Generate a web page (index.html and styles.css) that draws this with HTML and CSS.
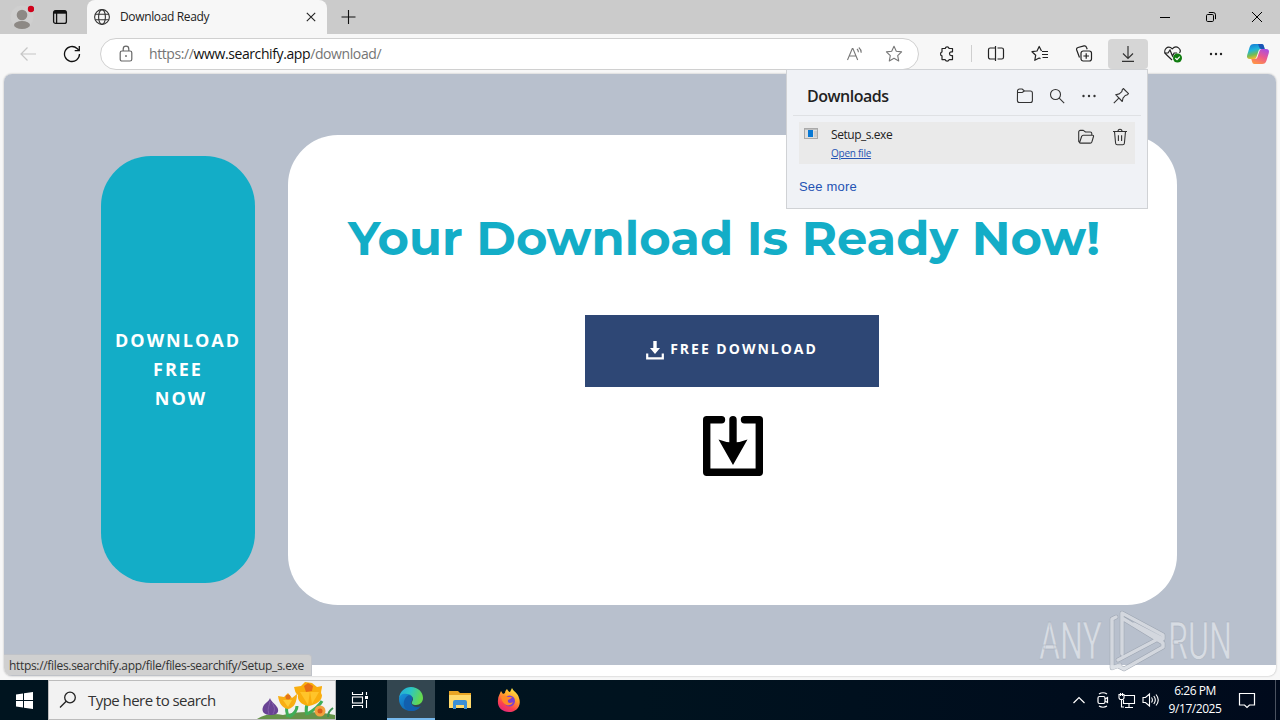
FILE: index.html
```
<!DOCTYPE html>
<html lang="en">
<head>
  <meta charset="UTF-8" />
  <meta name="viewport" content="width=device-width, initial-scale=1.0" />
  <title>Download Ready</title>
  <link rel="stylesheet" href="styles.css">
</head>
<body>
  <div class="browser">
    <div class="titlebar">
      <div class="profile">
        <svg width="24" height="26" viewBox="0 0 24 26"><circle cx="12" cy="13" r="11.5" fill="#cfcfcf"/><circle cx="12" cy="11" r="5.3" fill="#8d8985"/><ellipse cx="12" cy="21" rx="8" ry="4" fill="#8d8985"/><circle cx="21" cy="5" r="3.2" fill="#d0021b"/></svg>
      </div>
      <div class="tab-actions">
        <svg width="16" height="16" viewBox="0 0 16 16" fill="none" stroke="#111" stroke-width="1.3"><rect x="1.6" y="1.6" width="12.8" height="12.8" rx="2"/><path d="M2 3.2h12" stroke-width="3"/><path d="M4.6 4v10"/></svg>
      </div>
      <div class="tab">
        <svg width="18" height="18" viewBox="0 0 18 18" fill="none" stroke="#333" stroke-width="1.1"><circle cx="9" cy="9" r="7.4"/><ellipse cx="9" cy="9" rx="3.4" ry="7.4"/><path d="M2.2 6.2h13.6M2.2 11.8h13.6"/></svg>
        <span class="tab-title">Download Ready</span>
        <svg class="tab-close" width="10" height="10" viewBox="0 0 10 10" stroke="#222" stroke-width="1.1"><path d="M.8.8l8.4 8.4M9.2.8L.8 9.2"/></svg>
      </div>
      <svg class="new-tab" width="16" height="16" viewBox="0 0 16 16" stroke="#111" stroke-width="1.1"><path d="M8.500 1v14M1.500 8h14"/></svg>
      <div class="window-buttons">
        <span><svg width="12" height="12" viewBox="0 0 12 12" stroke="#000"><path d="M1 6.500h10"/></svg></span>
        <span><svg width="12" height="12" viewBox="0 0 12 12" fill="none" stroke="#000"><rect x="1.500" y="3.500" width="7" height="7" rx="1.200"/><path d="M3.800 1.500h4.400a2.300 2.300 0 0 1 2.300 2.300v4.400"/></svg></span>
        <span><svg width="12" height="12" viewBox="0 0 12 12" stroke="#000"><path d="M1 1l10 10M11 1L1 11"/></svg></span>
      </div>
    </div>

    <div class="toolbar">
      <span class="tool"><svg width="18" height="18" viewBox="0 0 18 18" fill="none" stroke="#c6c6c6" stroke-width="1.2"><path d="M17 9H2M8.500 2.500L2 9l6.500 6.500"/></svg></span>
      <span class="tool reload"><svg width="18" height="18" viewBox="0 0 18 18" fill="none" stroke="#111" stroke-width="1.3"><path d="M16.500 9a7.500 7.500 0 1 1-2.400-5.500L16 5.200"/><path d="M16.300 1v4.600h-4.600"/></svg></span>
      <div class="address">
        <svg class="lock" width="14" height="18" viewBox="0 0 14 18" fill="none" stroke="#666" stroke-width="1.2"><rect x="1.200" y="6" width="11.600" height="10" rx="1.800"/><path d="M4.200 6V4a2.800 2.800 0 0 1 5.600 0v2"/><circle cx="7" cy="11" r=".6" fill="#666" stroke-width=".8"/></svg>
        <span class="url">https://<b>www.searchify.app</b>/download/</span>
        <svg class="read" width="18" height="16" viewBox="0 0 18 16" fill="none" stroke="#777" stroke-width="1.1"><path d="M1.500 14L6.300 2.500h.6L11.700 14M3.200 10h6.800M11 3c1 .9 1.400 2 1.400 3.200M12.800 1.500c1.800 1.500 2.500 3.200 2.400 5.300"/></svg>
        <svg width="18" height="18" viewBox="0 0 18 18" fill="none" stroke="#777" stroke-width="1.1" stroke-linejoin="round"><path d="M9 1.300l2.300 4.900 5.300.7-3.900 3.700 1 5.300L9 13.300l-4.700 2.600 1-5.300L1.400 6.900l5.300-.7z"/></svg>
      </div>
      <span class="tool ext"><svg width="18" height="18" viewBox="0 0 18 18" fill="none" stroke="#222" stroke-width="1.200" stroke-linejoin="round"><path d="M4 3.500h3.200a2 2 0 0 1 3.900 0h3.400v3.300h-1.100a1.900 1.900 0 0 0 0 3.800h1.100v4h-3.400a2 2 0 0 1-3.900 0H4v-3.700a2.100 2.100 0 0 1 0-4z"/></svg></span>
      <i class="divider"></i>
      <span class="tool"><svg width="18" height="18" viewBox="0 0 18 18" fill="none" stroke="#222" stroke-width="1.200"><path d="M6.500 3H3.300a1.800 1.800 0 0 0-1.800 1.800v7.400A1.800 1.800 0 0 0 3.300 14h3.200M10.500 3h4.200a1.800 1.800 0 0 1 1.800 1.800v7.400a1.800 1.800 0 0 1-1.800 1.800h-4.200M6 14h2M6 3h2"/><path d="M8.500 1v15"/></svg></span>
      <span class="tool"><svg width="18" height="18" viewBox="0 0 18 18" fill="none" stroke="#222" stroke-width="1.200" stroke-linejoin="round"><path d="M10.500 6L8.200 1.500 6 6l-5 .7 3.700 3.500-.9 5.100L8.200 13l1.300.6M11 6.500h6M11 9.500h6M11.500 12.500H17"/></svg></span>
      <span class="tool"><svg width="18" height="18" viewBox="0 0 18 18" fill="none" stroke="#222" stroke-width="1.200"><rect x="6" y="6" width="10.500" height="10" rx="2.200"/><path d="M4.500 12.500L1.700 5a2 2 0 0 1 1.300-2.500l6-1.600a2 2 0 0 1 2.400 1.300l.8 2M11.200 8.200v5.600M8.400 11H14"/></svg></span>
      <span class="tool active"><svg width="18" height="18" viewBox="0 0 18 18" fill="none" stroke="#333" stroke-width="1.200"><path d="M9 1v12M4 8.500l5 5 5-5M3 16.300h12"/></svg></span>
      <span class="tool health"><svg width="20" height="18" viewBox="0 0 20 18" fill="none" stroke="#222" stroke-width="1.200"><path d="M9 15L3 9.300C-.7 5.500 4.800-.8 9.200 3.800 13.800-.8 19 4.500 16.500 8M1 8h4l2-3 2.500 6 1.600-3h3"/><circle cx="14.500" cy="13" r="4.500" fill="#107c10" stroke="none"/><path d="M12.300 13l1.700 1.600 2.800-3" stroke="#fff" /></svg></span>
      <span class="tool"><svg width="16" height="4" viewBox="0 0 16 4" fill="#222"><circle cx="3" cy="2" r="1.200"/><circle cx="8" cy="2" r="1.200"/><circle cx="13" cy="2" r="1.200"/></svg></span>
      <span class="tool copilot">
        <svg width="24" height="22" viewBox="0 0 24 22">
          <defs>
            <linearGradient id="cpBlue" x1="0" y1="0" x2=".3" y2="1"><stop offset="0" stop-color="#1473d4"/><stop offset=".45" stop-color="#20b5dc"/><stop offset=".75" stop-color="#73bd55"/><stop offset="1" stop-color="#f5b92f"/></linearGradient>
            <linearGradient id="cpPink" x1=".8" y1="0" x2=".3" y2="1"><stop offset="0" stop-color="#a84ee4"/><stop offset=".5" stop-color="#ec5a8d"/><stop offset="1" stop-color="#ff9347"/></linearGradient>
          </defs>
          <path d="M8 1h7.500c1.500 0 2 .8 2.500 2.500l.7 2.500H15c-1.400 0-2.100.7-2.600 2.200l-1.900 5.700C9.900 15.500 9 16 7.500 16H4c-2.500 0-3.500-1.500-2.800-4L3.500 4.500C4.200 2 5.500 1 8 1z" fill="url(#cpBlue)"/>
          <path d="M16 21H8.500C7 21 6.500 20.200 6 18.500L5.300 16H9c1.400 0 2.100-.7 2.600-2.200l1.900-5.700C14.100 6.500 15 6 16.500 6H20c2.500 0 3.500 1.500 2.800 4l-2.300 7.500C19.800 20 18.500 21 16 21z" fill="url(#cpPink)"/>
          <path d="M12 1h3.500c1.500 0 2 .8 2.500 2.500l.7 2.500h-3.400c-1 0-1.700-.5-2-1.700z" fill="#1b54b5"/>
        </svg>
      </span>
    </div>

    <div class="viewport">
      <div class="hero">
        <div class="side-cta">
          <div>DOWNLOAD</div>
          <div>FREE</div>
          <div class="last">NOW</div>
        </div>
        <div class="card">
          <h1>Your Download Is Ready Now!</h1>
          <a class="free-btn">
            <svg width="18" height="19" viewBox="0 0 18 19"><path d="M7.300 0h3.400v7H14l-5 6-5-6h3.300z" fill="#fff"/><path d="M1.200 12.500v4.800h15.600v-4.800" fill="none" stroke="#fff" stroke-width="2.200"/></svg>
            <span>FREE DOWNLOAD</span>
          </a>
          <svg class="save-icon" width="60" height="60" viewBox="0 0 60 60"><path d="M18.500 3.700H3.700v52.600h52.600V3.700H41.500" fill="none" stroke="#000" stroke-width="7.400" stroke-linecap="round" stroke-linejoin="round"/><path d="M30 3.700V30" stroke="#000" stroke-width="7.400" stroke-linecap="round"/><path d="M15.500 23.500Q30 29.500 44.500 23.500L30 49z"/></svg>
        </div>
      </div>
      <div class="status">https://files.searchify.app/file/files-searchify/Setup_s.exe</div>
    </div>

    <div class="downloads">
      <div class="downloads-head">
        <span class="downloads-title">Downloads</span>
        <svg width="18" height="18" viewBox="0 0 18 18" fill="none" stroke="#333" stroke-width="1.100"><path d="M1.500 5.500V4a2 2 0 0 1 2-2h2.700l2.200 2h6a2 2 0 0 1 2 2v7.500a2 2 0 0 1-2 2h-11a2 2 0 0 1-2-2zh4.700L8.400 4"/></svg>
        <svg width="18" height="18" viewBox="0 0 18 18" fill="none" stroke="#333" stroke-width="1.100"><circle cx="7.500" cy="7.500" r="5"/><path d="M11.200 11.200l5 5"/></svg>
        <svg width="18" height="18" viewBox="0 0 18 18" fill="#333"><circle cx="3.500" cy="9" r="1.200"/><circle cx="9" cy="9" r="1.200"/><circle cx="14.500" cy="9" r="1.200"/></svg>
        <svg width="18" height="18" viewBox="0 0 18 18" fill="none" stroke="#333" stroke-width="1.100" stroke-linejoin="round"><path d="M11.300 1.500l5.200 5.200-1 1-2.300.8-2.200 2.600-.7 3.400L3.700 7.700l3.600-.8 2.500-2.200.6-2.200zM6.800 11.200L1.800 16.200"/></svg>
      </div>
      <div class="file-row">
        <svg class="exe" width="14" height="12" viewBox="0 0 14 12"><rect x=".5" y=".5" width="13" height="10" fill="#dedede" stroke="#aaa"/><path d="M1 1.500h12" stroke="#c0c0c0"/><rect x="4" y="2" width="5" height="7" fill="#0878d4"/><path d="M10 4h3M10 6h3M10 8h3" stroke="#bbb"/></svg>
        <div class="file-info">
          <span class="file-name">Setup_s.exe</span>
          <a class="open-file">Open file</a>
        </div>
        <svg width="18" height="18" viewBox="0 0 18 18" fill="none" stroke="#333" stroke-width="1.100" stroke-linejoin="round"><path d="M2.500 14.500l-.8-1V4a1.600 1.600 0 0 1 1.600-1.600h3L8.500 4h4.700a1.600 1.600 0 0 1 1.600 1.600v1.600M2.500 14.800L4.700 8.300q.3-1.100 1.600-1.100h9.200q1.400 0 1 1.300l-1.600 5.300q-.4 1.300-1.700 1.300H3.500q-1 0-1-.6z"/></svg>
        <svg class="trash" width="18" height="18" viewBox="0 0 18 18" fill="none" stroke="#333" stroke-width="1.100"><path d="M2 3.500h14M7 3.500a2 2.200 0 0 1 4 0M3.500 3.500l1.100 11.700a1.700 1.700 0 0 0 1.700 1.500h5.400a1.700 1.700 0 0 0 1.700-1.500L14.500 3.500M7.400 7.200v5.800M10.600 7.200v5.800"/></svg>
      </div>
      <a class="see-more">See more</a>
    </div>
  </div>

  <div class="taskbar">
    <span class="start"><svg width="17" height="17" viewBox="0 0 17 17" fill="#fff"><path d="M0 2.500L7 1.500V8H0zM8 1.300L17 0v8H8zM0 9h7v6.500l-7-1zM8 9h9v8l-9-1.300z"/></svg></span>
    <div class="search">
      <svg width="18" height="18" viewBox="0 0 18 18" fill="none" stroke="#222" stroke-width="1.300"><circle cx="11" cy="6.500" r="5.300"/><path d="M7.200 10.300L1 16.500"/></svg>
      <span>Type here to search</span>
      <svg class="flowers" width="80" height="38" viewBox="0 0 80 38">
        <path d="M2 38C10 33 18 32 28 34 42 30 62 30 80 34v4z" fill="#659349"/>
        <path d="M33 36C30 27 32 22 34 17M52 34C49 26 54 20 56 12M52 33C58 30 65 24 67 20M34 36c5-3 8-7 8-11" fill="none" stroke="#3fae58" stroke-width="3"/>
        <path d="M15 17c1 4 7 7 8 11 1 5-3 6-8 6s-9-3-7-8c1-4 6-5 7-9z" fill="#694394"/>
        <path d="M15 20c-1 6-3 8-1 13M17 22c3 4 3 7 1 11" fill="none" stroke="#8561ac"/>
        <path d="M23 15l6 1 4-4 4 5 5-4c0 8-3 14-9 15-6-1-9-6-10-13z" fill="#f8ae14"/>
        <path d="M28 19l5 7 4-7" fill="#ffcc35"/><circle cx="33" cy="16" r="2.500" fill="#e37119"/>
        <path d="M39 6l7-1 4-4 7 1 5 4 5-1c0 4-2 6 0 9 0 6-5 9-13 11-8-1-12-6-11-11-3-2-3-5-4-8z" fill="#f9ad0d"/>
        <path d="M45 11l8 13 2-14 2 13 7-12" fill="#ffc42a"/>
        <path d="M49 5l4-3 5 3-1 5-6 1z" fill="#e66d16"/>
        <circle cx="65" cy="30" r="5.500" fill="#f2a13e"/><circle cx="65" cy="30" r="2.500" fill="#d85d19"/>
        <path d="M73 36c0-5 2-7 5-9" stroke="#3d9351" stroke-width="2" fill="none"/>
      </svg>
    </div>
    <span class="app"><svg width="18" height="18" viewBox="0 0 18 18" fill="none" stroke="#fff" stroke-width="1.100"><path d="M1.500 1v2.500h10V1M1.500 17v-2.500h10V17M15.500 1v3M15.500 9v8"/><rect x="1.500" y="6" width="10" height="6"/><path d="M14 6.500h3" stroke-width="3"/></svg></span>
    <span class="app running">
      <svg width="26" height="26" viewBox="0 0 26 26">
        <defs>
          <linearGradient id="edgeTop" x1="0" y1="0" x2="1" y2=".3"><stop offset="0" stop-color="#24a5dd"/><stop offset=".5" stop-color="#2bc6c5"/><stop offset="1" stop-color="#65d94f"/></linearGradient>
          <linearGradient id="edgeLow" x1="0" y1="0" x2="1" y2="1"><stop offset="0" stop-color="#1894dc"/><stop offset="1" stop-color="#0c4f9c"/></linearGradient>
        </defs>
        <path d="M1 12C2 5 7 1 13 1c7 0 12 5 12 11 0 4-3 7-7 7-3 0-5-1-4-3 3-4-1-8-6-7-3 0-6 1-7 3z" fill="url(#edgeTop)"/>
        <path d="M1 13c0-4 4-6 8-5 4 0 6 3 5 6-1 1-1 2-1 3 1 4 6 5 10 3-3 4-7 5-10 5C6 25 1 20 1 13z" fill="url(#edgeLow)"/>
        <path d="M9 24c-5-4-4-12 2-15 3 1 4 3 3 5-2 3-1 7 3 8 2 .500 4 0 5-1-3 4-8 5-13 3z" fill="#125fae"/>
      </svg>
    </span>
    <span class="app"><svg width="22" height="20" viewBox="0 0 22 20"><path d="M0 1h9l2 2h11v15H0z" fill="#e9a524"/><path d="M0 5h22v13H0z" fill="#ffd96b"/><path d="M4 19v-7q0-2 2-2h10q2 0 2 2v7h-3v-4H7v4z" fill="#3b8fd5"/></svg></span>
    <span class="app">
      <svg width="24" height="24" viewBox="0 0 24 24">
        <defs><linearGradient id="fox" x1=".8" y1="0" x2=".3" y2="1"><stop offset="0" stop-color="#fff04a"/><stop offset=".4" stop-color="#ffa22b"/><stop offset=".75" stop-color="#fb4050"/><stop offset="1" stop-color="#e1277b"/></linearGradient></defs>
        <path d="M4 3l2 3 2-1c0-2 1-3 2-4 1 2 2 3 3 3l2-4c1 3 6 5 7 10 3 8-3 14-10 14C5 24 0 19 1 12c0-4 2-6 3-9z" fill="url(#fox)"/>
        <circle cx="12.500" cy="13" r="5.500" fill="#7b3fd0"/>
        <path d="M4 9c3-2 5-1 7 0h4c-1 2-3 2-4 3-1 3 2 4 5 2-2 5-10 5-12-5z" fill="#ff8a25"/>
      </svg>
    </span>
    <div class="tray">
      <svg width="18" height="18" viewBox="0 0 18 18" fill="none" stroke="#fff" stroke-width="1.200"><path d="M3.500 12L9 6.500l5.500 5.500"/></svg>
      <svg width="18" height="18" viewBox="0 0 18 18" fill="none" stroke="#fff" stroke-width="1.200"><rect x="4" y="5.500" width="7" height="7" rx="1.500"/><path d="M11 8l2.500-1.500v5L11 10M5 3q4-2.500 8 0M5 15q4 2.500 8 0"/></svg>
      <svg width="18" height="18" viewBox="0 0 18 18" fill="none" stroke="#fff" stroke-width="1.100"><path d="M6 4.500h10.500v8H5.500V9M11 12.500V16M7 16.500h8M3.500 8.500V16H6"/><path d="M1 3.500h5v3.500l-1 1.500H2L1 7zM2.500 2v3M4.500 2v3"/></svg>
      <svg width="18" height="18" viewBox="0 0 18 18" fill="none" stroke="#fff" stroke-width="1.100"><path d="M1 6.500h2.500L7.500 3v12l-4-3.500H1zM9.500 6.500q1.800 2.500 0 5M11.800 5q3 4 0 8M14 3.500q4.500 5.500 0 11"/></svg>
      <div class="clock">6:26 PM<br>9/17/2025</div>
      <svg class="notify" width="18" height="18" viewBox="0 0 18 18" fill="none" stroke="#fff" stroke-width="1.200"><path d="M1.500 2.500h15V14h-5L9 16.500 6.500 14h-5z"/></svg>
    </div>
  </div>

  <svg class="watermark" width="220" height="66" viewBox="0 0 220 66">
    <g class="mark-text">
      <text x="3" y="50" textLength="63" lengthAdjust="spacingAndGlyphs">ANY</text>
      <text x="132" y="50" textLength="64" lengthAdjust="spacingAndGlyphs">RUN</text>
    </g>
    <g fill="none" stroke-linejoin="round" stroke-linecap="round">
      <path d="M80 8l-4 2v49l8-3M86 45V4l41 22v4L98 15M86 9l41 25v4L88 60l-6-3M82 51l38-20" stroke="#98a0ad" stroke-width="4.500"/>
      <path d="M80 8l-4 2v49l8-3M86 45V4l41 22v4L98 15M86 9l41 25v4L88 60l-6-3M82 51l38-20" stroke="#d8dce2" stroke-width="3.500"/>
    </g>
  </svg>
</body>
</html>
```
FILE: styles.css
```
* {
  box-sizing: border-box;
}
body {
  margin: 0;
  width: 1280px;
  height: 720px;
  overflow: hidden;
  position: relative;
  font-family: "Segoe UI", "Open Sans", sans-serif;
  color: #222;
}
svg {
  display: block;
  flex-shrink: 0;
}
.browser {
  height: 680px;
  background: #f7f7f7;
  display: flex;
  flex-direction: column;
}

/* tabs */
.titlebar {
  height: 34px;
  background: #cbcbcb;
  display: flex;
  align-items: center;
}
.profile {
  margin-left: 10px;
}
.tab-actions {
  margin-left: 18px;
}
.tab {
  margin-left: 19px;
  width: 240px;
  height: 34px;
  padding: 0 11px 1px 6px;
  display: flex;
  align-items: center;
  background: #f7f7f7;
  border-radius: 8px 8px 0 0;
}
.tab-title {
  flex: 1;
  margin-left: 9px;
  font-size: 12px;
  letter-spacing: -0.35px;
}
.new-tab {
  margin-left: 13px;
}
.window-buttons {
  margin-left: auto;
  display: flex;
}
.window-buttons span {
  width: 46px;
  display: flex;
  justify-content: center;
}

/* toolbar */
.toolbar {
  height: 40px;
  padding: 4px 2px 5px 8px;
  display: flex;
  align-items: center;
}
.tool {
  width: 40px;
  height: 30px;
  margin-right: 4px;
  display: flex;
  align-items: center;
  justify-content: center;
  border-radius: 4px;
}
.tool.reload {
  margin-right: 8px;
}
.tool.active {
  background: #d6d6d6;
}
.tool.health {
  padding-left: 2px;
}
.tool.copilot {
  margin: 0 0 0 -2px;
}
.address {
  width: 819px;
  height: 32px;
  margin-right: 8px;
  padding: 0 15px 0 18px;
  display: flex;
  align-items: center;
  background: #fff;
  border: 1px solid #d0d0d0;
  border-radius: 16px;
}
.url {
  flex: 1;
  margin-left: 16px;
  font-size: 14px;
  letter-spacing: -0.4px;
  color: #757575;
}
.url b {
  font-weight: normal;
  color: #111;
}
.read {
  margin-right: 21px;
}
.tool.ext {
  margin-right: 4px;
}
.divider {
  width: 1px;
  height: 17px;
  margin-right: 4px;
  background: #cfcfcf;
}

/* page */
.viewport {
  position: relative;
  height: 602px;
  margin: 0 4px;
  overflow: hidden;
  background: #fff;
  border-radius: 8px;
  box-shadow: 0 0 2px #aaa;
}
.hero {
  height: 591px;
  padding-left: 97px;
  display: flex;
  align-items: center;
  gap: 33px;
  background: #b8c0cd;
}
.side-cta {
  width: 154px;
  height: 427px;
  display: flex;
  flex-direction: column;
  justify-content: center;
  text-align: center;
  background: #13adc7;
  border-radius: 50px;
  color: #fff;
  font: bold 18px/29px "Open Sans", sans-serif;
  letter-spacing: 2px;
}
.side-cta .last {
  padding-left: 6px;
}
.card {
  width: 889px;
  height: 470px;
  padding-top: 73px;
  display: flex;
  flex-direction: column;
  align-items: center;
  background: #fff;
  border-radius: 50px;
}
h1 {
  align-self: flex-start;
  margin: 0 0 47px 60px;
  font: bold 48px/60px Montserrat, Inter, sans-serif;
  white-space: nowrap;
  color: #13adc7;
}
.free-btn {
  width: 294px;
  height: 72px;
  margin-right: 1px;
  padding-bottom: 2px;
  display: flex;
  align-items: center;
  justify-content: center;
  gap: 6px;
  background: #2e4775;
  color: #fff;
  font: bold 14px/20px "Open Sans", sans-serif;
  letter-spacing: 2px;
}
.free-btn span {
  padding-bottom: 2px;
}
.free-btn svg {
  margin-top: 1px;
}
.save-icon {
  margin-top: 29px;
}
.status {
  position: absolute;
  left: 0;
  bottom: 0;
  width: 308px;
  height: 22px;
  padding-left: 5px;
  background: #d0d0d0;
  border: 1px solid #bfc2c8;
  border-left: 0;
  border-radius: 0 4px 0 0;
  font-size: 12px;
  line-height: 21px;
  letter-spacing: -0.32px;
  white-space: nowrap;
  color: #333;
}

/* downloads flyout */
.downloads {
  position: absolute;
  top: 69px;
  left: 786px;
  width: 362px;
  height: 140px;
  padding: 0 6px;
  background: #f0f2f6;
  border: 1px solid #d0d2d5;
}
.downloads-head {
  height: 46px;
  padding: 6px 11px 0 14px;
  display: flex;
  align-items: center;
  gap: 14px;
  border-bottom: 1px solid #dfe1e4;
}
.downloads-title {
  flex: 1;
  font-size: 16px;
  font-weight: 600;
  letter-spacing: -0.5px;
}
.file-row {
  height: 42px;
  margin: 6px 6px 0;
  padding: 0 6px 0 5px;
  display: flex;
  background: #eaeaea;
}
.file-row > svg {
  margin-top: 6px;
}
.file-row .trash {
  margin-left: 16px;
}
.file-info {
  flex: 1;
  margin-left: 13px;
  display: flex;
  flex-direction: column;
}
.file-name {
  margin-top: 4px;
  font-size: 12px;
  line-height: 18px;
  letter-spacing: -0.45px;
}
.open-file {
  margin-top: 1px;
  font-size: 10px;
  line-height: 16px;
  letter-spacing: -0.25px;
  color: #2453b3;
  text-decoration: underline;
}
.see-more {
  display: block;
  margin: 15px 6px 0;
  font: 13px/16px "Liberation Sans", sans-serif;
  letter-spacing: 0.2px;
  color: #2453b3;
}

/* taskbar */
.taskbar {
  height: 40px;
  display: flex;
  align-items: center;
  background: linear-gradient(90deg, #00141f, #00131f 50%, #000a1c);
}
.start {
  width: 48px;
  display: flex;
  justify-content: center;
}
.search {
  width: 288px;
  height: 40px;
  padding-left: 10px;
  display: flex;
  align-items: center;
  background: #f2f2f2;
  border: 1px solid #bcbcbc;
  font-size: 15px;
  letter-spacing: -0.55px;
  color: #333;
}
.search span {
  margin-left: 11px;
  flex: 1;
}
.app {
  width: 48px;
  height: 40px;
  margin-right: 1px;
  display: flex;
  align-items: center;
  justify-content: center;
}
.search + .app {
  width: 50px;
  padding-right: 2px;
}
.app.running {
  background: #334650;
  border-bottom: 2px solid #76b9ed;
}
.tray {
  margin-left: auto;
  height: 40px;
  padding-right: 4px;
  display: flex;
  align-items: center;
  gap: 6px;
}
.clock {
  width: 60px;
  margin-left: -1px;
  text-align: center;
  font-size: 12px;
  line-height: 18px;
  letter-spacing: -0.45px;
  color: #fff;
}
.notify {
  margin: 0 14px 0 7px;
}
.tray::after {
  content: "";
  width: 1px;
  height: 40px;
  margin-left: -1px;
  background: #4a5260;
}

/* watermark */
.watermark {
  position: absolute;
  left: 1036px;
  top: 609px;
  opacity: 0.85;
}
.mark-text {
  font: 400 51px Roboto, sans-serif;
  fill: #dde1e7;
  stroke: #a3abb8;
  stroke-width: 0.5px;
}
```
